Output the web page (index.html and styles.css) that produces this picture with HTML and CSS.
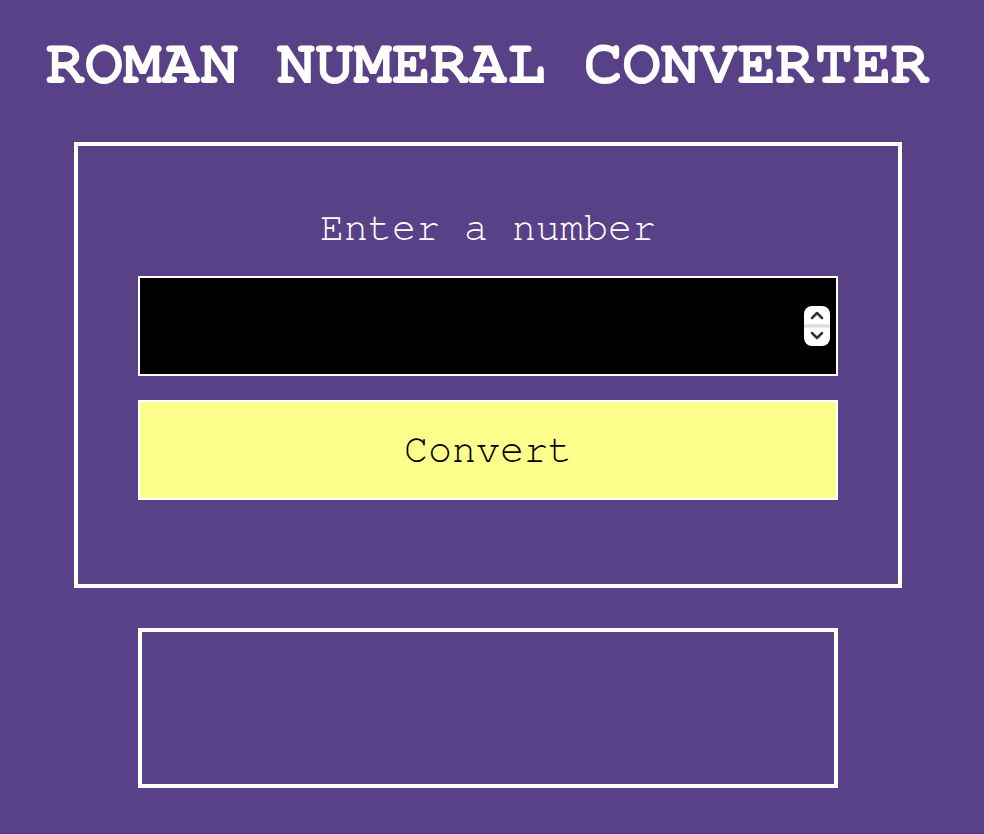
FILE: index.html
```html
<!DOCTYPE html>
<html lang="en">
<head>
<meta charset="utf-8">
<title>Roman Numeral Converter</title>
<link rel="stylesheet" href="styles.css">
</head>
<body>
<main class="page">
  <h1 class="title">ROMAN NUMERAL CONVERTER</h1>
  <form class="card" onsubmit="return false">
    <label class="label" for="number">Enter a number</label>
    <div class="input-wrap">
      <input class="number-input" id="number" type="number">
      <span class="spinner" aria-hidden="true">
        <svg width="26" height="40" viewBox="0 0 26 40">
          <defs>
            <linearGradient id="div" x1="0" y1="0" x2="0" y2="1">
              <stop offset="0" stop-color="#ffffff"/>
              <stop offset="0.5" stop-color="#d4d4d4"/>
              <stop offset="1" stop-color="#ffffff"/>
            </linearGradient>
          </defs>
          <rect x="0" y="0" width="26" height="40" rx="8" fill="#ffffff"/>
          <rect x="0" y="17" width="26" height="6" fill="url(#div)"/>
          <path d="M8 12 L13 7 L18 12" fill="none" stroke="#333333" stroke-width="2.5" stroke-linecap="round" stroke-linejoin="round"/>
          <path d="M8 27 L13 32 L18 27" fill="none" stroke="#333333" stroke-width="2.5" stroke-linecap="round" stroke-linejoin="round"/>
        </svg>
      </span>
    </div>
    <button class="convert" type="submit">Convert</button>
  </form>
  <div class="output"></div>
</main>
</body>
</html>
```
FILE: styles.css
```css
* {
  box-sizing: border-box;
}

html, body {
  margin: 0;
  padding: 0;
}

body {
  background: #594187;
  font-family: "Nimbus Mono PS", "Nimbus Mono L", "FreeMono", "Courier 10 Pitch", "Courier New", "Liberation Mono", monospace;
  color: #ffffff;
}

.page {
  padding: 28px 8px 40px 0;
  display: flex;
  flex-direction: column;
  align-items: center;
}

.title {
  margin: 0 0 42px;
  font-size: 64px;
  line-height: 72px;
  font-weight: 700;
  text-align: center;
  white-space: nowrap;
}

.card {
  width: 828px;
  border: 4px solid #ffffff;
  padding: 60px 0 84px;
  margin: 0 0 40px;
  display: flex;
  flex-direction: column;
  align-items: center;
}

.label {
  display: block;
  font-size: 40px;
  line-height: 45px;
  margin-bottom: 25px;
  text-align: center;
}

.input-wrap {
  position: relative;
  width: 700px;
  height: 100px;
}

.number-input {
  width: 100%;
  height: 100%;
  background: #000000;
  color: #ffffff;
  border: 2px solid #ffffff;
  border-radius: 0;
  outline: none;
  font-family: inherit;
  font-size: 40px;
  padding: 0 40px 0 10px;
  -moz-appearance: textfield;
}

.number-input::-webkit-inner-spin-button,
.number-input::-webkit-outer-spin-button {
  -webkit-appearance: none;
  margin: 0;
}

.spinner {
  position: absolute;
  right: 8px;
  top: 30px;
  width: 26px;
  height: 40px;
  display: block;
}

.spinner svg {
  display: block;
}

.convert {
  margin-top: 24px;
  width: 700px;
  height: 100px;
  background: #fefe8c;
  border: 2px solid #ffffff;
  border-radius: 0;
  color: #000000;
  font-family: inherit;
  font-size: 40px;
  line-height: 45px;
  padding: 0;
  cursor: pointer;
}

.output {
  width: 700px;
  height: 160px;
  border: 4px solid #ffffff;
}
```
